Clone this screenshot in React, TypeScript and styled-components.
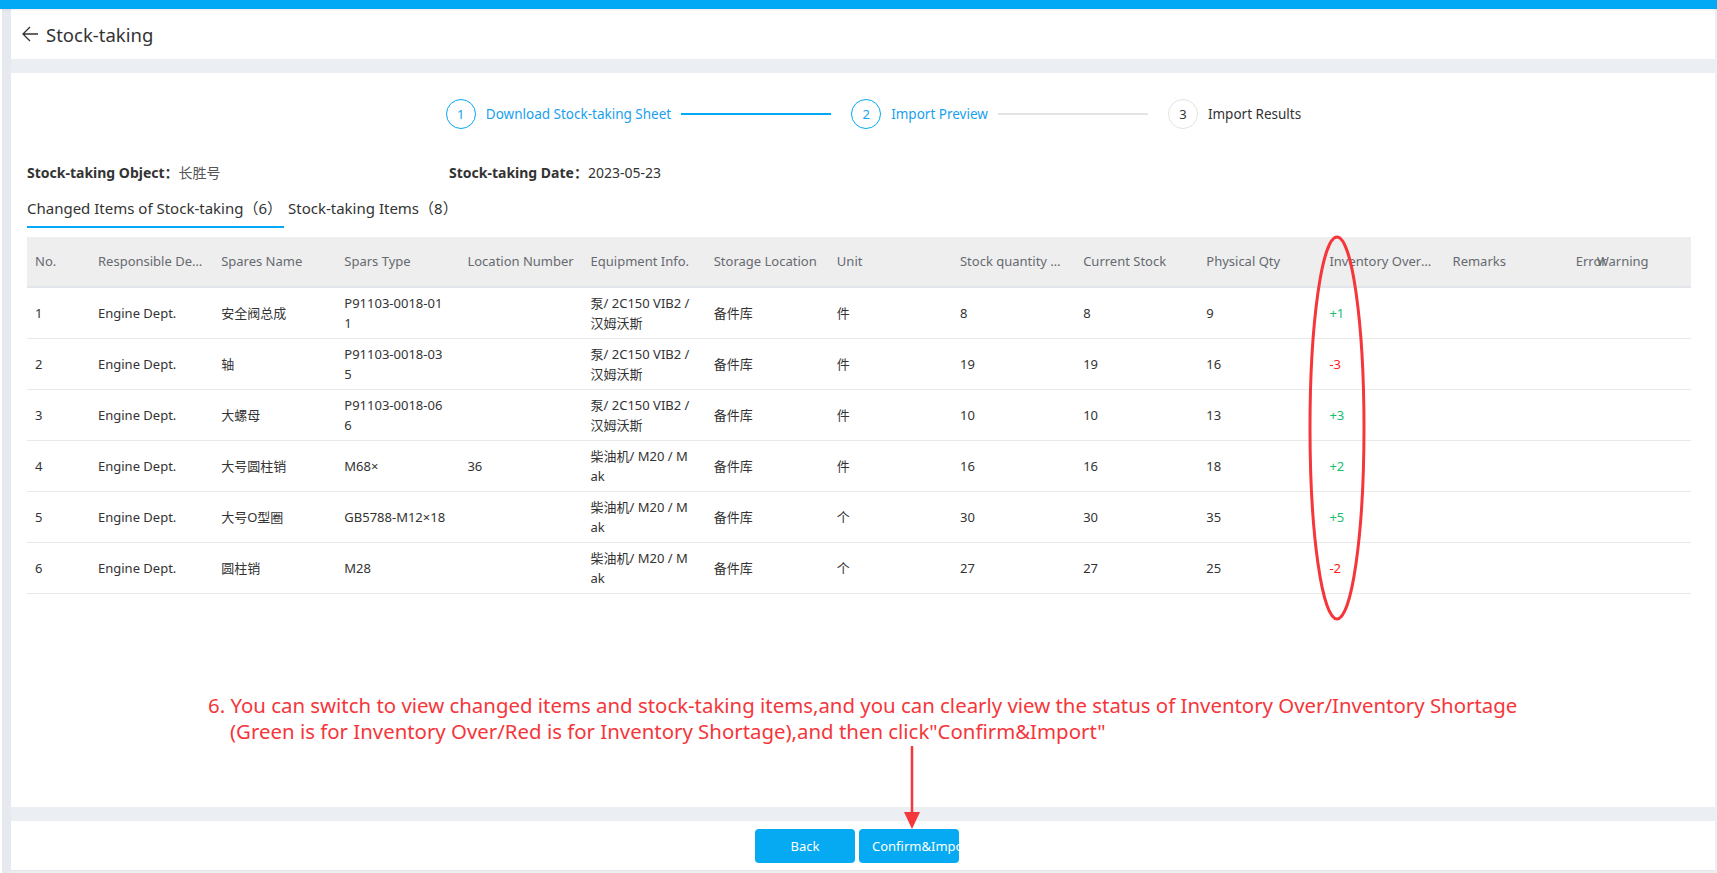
import styled, { createGlobalStyle } from "styled-components";

const GlobalStyle = createGlobalStyle`
    html, body {
        margin: 0;
        padding: 0;
        background: #ffffff;
    }

    body {
        font-family: "Noto Sans", "Noto Sans CJK SC", sans-serif;
        color: #333333;
    }

    * {
        box-sizing: border-box;
    }
`

interface StockRow {
    no: number;
    dept: string;
    name: string;
    type: string;
    location: string;
    equipment: string;
    storage: string;
    unit: string;
    before: number;
    current: number;
    physical: number;
}

const EQUIP_PUMP = "泵/ 2C150 VIB2 /\n汉姆沃斯";
const EQUIP_DIESEL = "柴油机/ M20 / M\nak";

const rows: StockRow[] = [
    { no: 1, dept: "Engine Dept.", name: "安全阀总成", type: "P91103-0018-01\n1", location: "", equipment: EQUIP_PUMP, storage: "备件库", unit: "件", before: 8, current: 8, physical: 9 },
    { no: 2, dept: "Engine Dept.", name: "轴", type: "P91103-0018-03\n5", location: "", equipment: EQUIP_PUMP, storage: "备件库", unit: "件", before: 19, current: 19, physical: 16 },
    { no: 3, dept: "Engine Dept.", name: "大螺母", type: "P91103-0018-06\n6", location: "", equipment: EQUIP_PUMP, storage: "备件库", unit: "件", before: 10, current: 10, physical: 13 },
    { no: 4, dept: "Engine Dept.", name: "大号圆柱销", type: "M68×", location: "36", equipment: EQUIP_DIESEL, storage: "备件库", unit: "件", before: 16, current: 16, physical: 18 },
    { no: 5, dept: "Engine Dept.", name: "大号O型圈", type: "GB5788-M12×18", location: "", equipment: EQUIP_DIESEL, storage: "备件库", unit: "个", before: 30, current: 30, physical: 35 },
    { no: 6, dept: "Engine Dept.", name: "圆柱销", type: "M28", location: "", equipment: EQUIP_DIESEL, storage: "备件库", unit: "个", before: 27, current: 27, physical: 25 },
];

const columns = [
    "No.",
    "Responsible Department",
    "Spares Name",
    "Spars Type",
    "Location Number",
    "Equipment Info.",
    "Storage Location",
    "Unit",
    "Stock quantity before stock-taking",
    "Current Stock",
    "Physical Qty",
    "Inventory Overage/Shortage",
    "Remarks",
];

const steps = [
    { label: "Download Stock-taking Sheet", state: "done" },
    { label: "Import Preview", state: "active" },
    { label: "Import Results", state: "todo" },
] as const;

function formatDiff(value: number) {
    return value > 0 ? `+${value}` : `${value}`;
}

export default function App() {
    return (
        <Page>
            <GlobalStyle />
            <TopBar />
            <Body>
                <LeftRail />
                <Main>
                    <Header>
                        <BackIcon width="18" height="18" viewBox="0 0 18 18">
                            <path d="M17 9H2M9 2L2 9l7 7" fill="none" stroke="#333" strokeWidth="1.3" />
                        </BackIcon>
                        <Title>Stock-taking</Title>
                    </Header>

                    <Panel>
                        <Steps>
                            {steps.map((step, index) => (
                                <Step key={step.label}>
                                    <StepCircle state={step.state}>{index + 1}</StepCircle>
                                    <StepLabel state={step.state}>{step.label}</StepLabel>
                                    {index < steps.length - 1 && <Connector done={step.state === "done"} />}
                                </Step>
                            ))}
                        </Steps>

                        <InfoRow>
                            <InfoItem>
                                <InfoLabel>Stock-taking Object：</InfoLabel>
                                <InfoValue muted>长胜号</InfoValue>
                            </InfoItem>
                            <InfoItem>
                                <InfoLabel>Stock-taking Date：</InfoLabel>
                                <InfoValue>2023-05-23</InfoValue>
                            </InfoItem>
                        </InfoRow>

                        <Tabs>
                            <Tab active>Changed Items of Stock-taking（6）</Tab>
                            <Tab>Stock-taking Items（8）</Tab>
                        </Tabs>

                        <Table>
                            <colgroup>
                                <col style={{ width: 63 }} />
                                {columns.slice(1).map((c) => <col key={c} />)}
                                <col />
                            </colgroup>
                            <thead>
                                <tr>
                                    {columns.map((c) => <Th key={c}>{c}</Th>)}
                                    <Th>Error<Overlap>Warning</Overlap></Th>
                                </tr>
                            </thead>
                            <tbody>
                                {rows.map((row) => {
                                    const diff = row.physical - row.current;
                                    return (
                                        <tr key={row.no}>
                                            <Td>{row.no}</Td>
                                            <Td>{row.dept}</Td>
                                            <Td>{row.name}</Td>
                                            <Td>{row.type}</Td>
                                            <Td>{row.location}</Td>
                                            <Td>{row.equipment}</Td>
                                            <Td>{row.storage}</Td>
                                            <Td>{row.unit}</Td>
                                            <Td>{row.before}</Td>
                                            <Td>{row.current}</Td>
                                            <Td>{row.physical}</Td>
                                            <Td><Diff positive={diff > 0}>{formatDiff(diff)}</Diff></Td>
                                            <Td></Td>
                                            <Td></Td>
                                        </tr>
                                    );
                                })}
                            </tbody>
                        </Table>

                        <Note>
                            <NoteLine>6. You can switch to view changed items and stock-taking items,and you can clearly view the status of Inventory Over/Inventory Shortage</NoteLine>
                            <NoteLine indent>(Green is for Inventory Over/Red is for Inventory Shortage),and then click"Confirm&amp;Import"</NoteLine>
                        </Note>

                        <Ellipse width="64" height="392" viewBox="0 0 64 392">
                            <ellipse cx="32" cy="194" rx="27" ry="191" fill="none" stroke="#f5363a" strokeWidth="3" />
                        </Ellipse>
                    </Panel>

                    <Footer>
                        <Button>Back</Button>
                        <Button>Confirm&amp;Import</Button>
                    </Footer>
                </Main>
            </Body>

            <Arrow width="16" height="86" viewBox="0 0 16 86">
                <path d="M8 1V70" stroke="#f5363a" strokeWidth="2.5" />
                <polygon points="0,67 16,67 8,84" fill="#f5363a" />
            </Arrow>
        </Page>
    );
}

const Page = styled.div`
    position: relative;
    display: flex;
    flex-direction: column;
    height: 100vh;
    overflow: hidden;
`

const TopBar = styled.div`
    height: 9px;
    flex-shrink: 0;
    background-color: #03a9f4;
    box-shadow: 0 1px 2px rgba(0, 0, 0, 0.08);
    position: relative;
    z-index: 1;
`

const Body = styled.div`
    flex: 1;
    display: flex;
    flex-direction: row;
    min-height: 0;
`

const LeftRail = styled.div`
    width: 9px;
    margin-left: 2px;
    flex-shrink: 0;
    background-color: #e6e9ed;
`

const Main = styled.div`
    flex: 1;
    display: flex;
    flex-direction: column;
    gap: 14px;
    padding-right: 2px;
    padding-bottom: 2px;
    background-color: #ebeef2;
`

const Header = styled.div`
    height: 50px;
    flex-shrink: 0;
    display: flex;
    align-items: center;
    gap: 7px;
    padding-left: 10px;
    background-color: #ffffff;
`

const BackIcon = styled.svg`
    display: block;
`

const Title = styled.div`
    font-size: 18.5px;
    color: #333333;
`

const Panel = styled.div`
    position: relative;
    flex: 1;
    padding: 26px 24px 0 16px;
    background-color: #ffffff;
`

const Steps = styled.div`
    display: flex;
    justify-content: center;
    align-items: center;
    padding-left: 29px;
`

const Step = styled.div`
    display: flex;
    align-items: center;
`

type StepState = "done" | "active" | "todo";

const StepCircle = styled.div<{ state: StepState }>`
    width: 30px;
    height: 30px;
    display: flex;
    align-items: center;
    justify-content: center;
    border-radius: 50%;
    border: 1px solid ${({ state }) => state === "todo" ? "#e3e3e3" : "#03a9f4"};
    color: ${({ state }) => state === "todo" ? "#333333" : "#1a9fef"};
    font-size: 13px;
`

const StepLabel = styled.div<{ state: StepState }>`
    margin-left: 10px;
    font-size: 13.5px;
    color: ${({ state }) => state === "todo" ? "#333333" : "#1a9fef"};
`

const Connector = styled.div<{ done: boolean }>`
    width: 150px;
    height: 2px;
    margin: 0 20px 0 10px;
    background-color: ${({ done }) => done ? "#03a9f4" : "#e4e4e4"};
`

const InfoRow = styled.div`
    display: grid;
    grid-template-columns: 422px auto;
    margin-top: 34px;
    font-size: 14px;
    line-height: 20px;
    color: #333333;
`

const InfoItem = styled.div`
    display: flex;
`

const InfoLabel = styled.span`
    font-weight: 700;
`

const InfoValue = styled.span<{ muted?: boolean }>`
    color: ${({ muted }) => muted ? "#555555" : "#333333"};
`

const Tabs = styled.div`
    display: flex;
    gap: 4px;
    margin-top: 15px;
`

const Tab = styled.div<{ active?: boolean }>`
    padding: 0 2px 8px 0;
    font-size: 15px;
    line-height: 20px;
    color: #333333;
    border-bottom: 2px solid ${({ active }) => active ? "#03a9f4" : "transparent"};
`

const Table = styled.table`
    width: 1664px;
    margin-top: 9px;
    border-collapse: collapse;
    table-layout: fixed;
    font-size: 13px;
`

const Th = styled.th`
    height: 50px;
    padding: 0 8px 2px;
    text-align: left;
    font-weight: 400;
    color: #666a70;
    background-color: #eeeeee;
    border-bottom: 2px solid #e2e5e9;
    white-space: nowrap;
    overflow: hidden;
    text-overflow: ellipsis;
`

const Overlap = styled.span`
    margin-left: -10px;
`

const Td = styled.td`
    height: 51px;
    padding: 5px 8px;
    line-height: 20px;
    color: #333333;
    border-bottom: 1px solid #e8eaec;
    white-space: pre-line;
    word-break: break-all;
`

const Diff = styled.span<{ positive: boolean }>`
    color: ${({ positive }) => positive ? "#19be6b" : "#ff2020"};
`

const Note = styled.div`
    margin-top: 98px;
    padding-left: 181px;
    font-size: 20.4px;
    line-height: 26px;
    color: #f5363a;
`

const NoteLine = styled.div<{ indent?: boolean }>`
    padding-left: ${({ indent }) => indent ? "22px" : "0"};
    white-space: nowrap;
`

const Ellipse = styled.svg`
    position: absolute;
    left: 1294px;
    top: 161px;
    pointer-events: none;
`

const Footer = styled.div`
    height: 50px;
    flex-shrink: 0;
    display: flex;
    justify-content: center;
    align-items: center;
    gap: 4px;
    padding-right: 12px;
    background-color: #ffffff;
    border-bottom: 1px solid #e5e5e5;
`

const Button = styled.button`
    width: 100px;
    height: 34px;
    padding: 0 13px;
    border: none;
    border-radius: 4px;
    background-color: #05aaf3;
    color: #ffffff;
    font-family: "Noto Sans", sans-serif;
    font-size: 13px;
    white-space: nowrap;
    overflow: hidden;
    text-align: center;
`

const Arrow = styled.svg`
    position: absolute;
    left: 904px;
    top: 745px;
    pointer-events: none;
`
